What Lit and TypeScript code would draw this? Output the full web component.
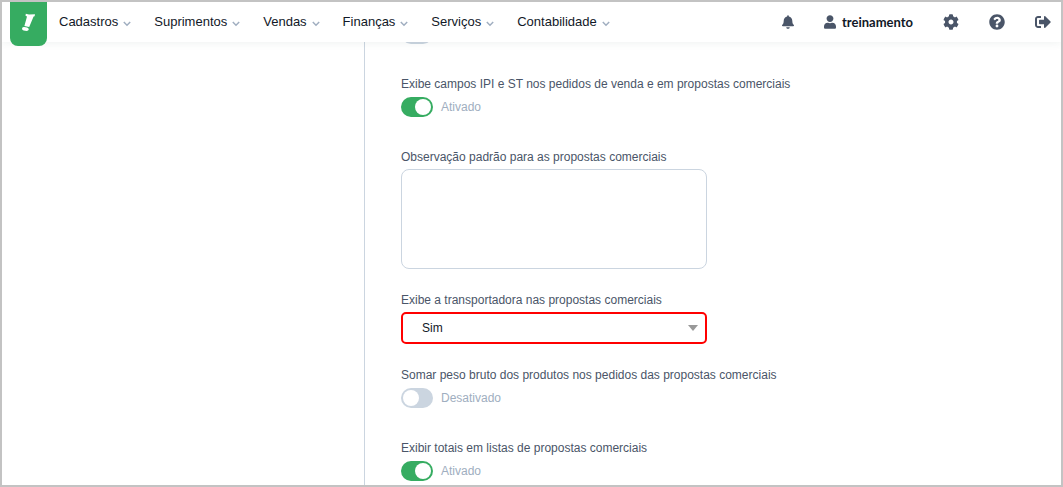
import { LitElement, html, css, svg } from 'lit';
import { customElement, property } from 'lit/decorators.js';

const icons = {
  bell: { box: '0 0 448 512', d: 'M224 512c35.32 0 63.97-28.65 63.97-64H160.03c0 35.35 28.65 64 63.97 64zm215.39-149.71c-19.32-20.76-55.47-51.99-55.47-154.29 0-77.7-54.48-139.9-127.94-155.16V32c0-17.67-14.32-32-31.98-32s-31.98 14.33-31.98 32v20.84C118.56 68.1 64.08 130.3 64.08 208c0 102.3-36.15 133.53-55.47 154.29-6 6.45-8.66 14.16-8.61 21.71.11 16.4 12.98 32 32.1 32h383.8c19.12 0 32-15.6 32.1-32 .05-7.55-2.61-15.27-8.61-21.71z' },
  user: { box: '0 0 448 512', d: 'M224 256c70.7 0 128-57.3 128-128S294.7 0 224 0 96 57.3 96 128s57.3 128 128 128zm89.6 32h-16.7c-22.2 10.2-46.9 16-72.9 16s-50.6-5.8-72.9-16h-16.7C60.2 288 0 348.2 0 422.4V464c0 26.5 21.5 48 48 48h352c26.5 0 48-21.5 48-48v-41.6c0-74.2-60.2-134.4-134.4-134.4z' },
  gear: { box: '0 0 512 512', d: 'M487.4 315.7l-42.6-24.6c4.3-23.2 4.3-47 0-70.2l42.6-24.6c4.9-2.8 7.1-8.6 5.5-14-11.1-35.6-30-67.8-54.7-94.6-3.8-4.1-10-5.1-14.8-2.3L380.8 110c-17.9-15.4-38.5-27.3-60.8-35.1V25.8c0-5.6-3.9-10.5-9.4-11.7-36.7-8.2-74.3-7.8-109.2 0-5.5 1.2-9.4 6.1-9.4 11.7V75c-22.2 7.9-42.8 19.8-60.8 35.1L88.700 85.500c-4.900-2.800-11-1.900-14.800 2.300-24.700 26.700-43.600 58.900-54.700 94.600-1.700 5.400.6 11.200 5.500 14L67.300 221c-4.300 23.200-4.300 47 0 70.200l-42.600 24.600c-4.900 2.800-7.100 8.600-5.500 14 11.100 35.600 30 67.800 54.700 94.600 3.800 4.100 10 5.100 14.800 2.300l42.600-24.600c17.900 15.400 38.500 27.300 60.800 35.100v49.200c0 5.600 3.900 10.500 9.400 11.700 36.700 8.200 74.300 7.800 109.200 0 5.500-1.200 9.400-6.100 9.400-11.700v-49.200c22.200-7.900 42.800-19.800 60.800-35.100l42.600 24.600c4.900 2.800 11 1.900 14.800-2.300 24.700-26.700 43.600-58.900 54.700-94.600 1.500-5.500-.7-11.300-5.600-14.100zM256 336c-44.100 0-80-35.900-80-80s35.900-80 80-80 80 35.900 80 80-35.900 80-80 80z' },
  help: { box: '0 0 512 512', d: 'M504 256c0 136.997-111.043 248-248 248S8 392.997 8 256C8 119.083 119.043 8 256 8s248 111.083 248 248zM262.655 90c-54.497 0-89.255 22.957-116.549 63.758-3.536 5.286-2.353 12.415 2.715 16.258l34.699 26.310c5.205 3.947 12.621 3.008 16.665-2.122 17.864-22.658 30.113-35.797 57.303-35.797 20.429 0 45.698 13.148 45.698 32.958 0 14.976-12.363 22.667-32.534 33.976C247.128 238.528 216 254.941 216 296v4c0 6.627 5.373 12 12 12h56c6.627 0 12-5.373 12-12v-1.333c0-28.462 83.186-29.647 83.186-106.667 0-58.002-60.165-102-116.531-102zM256 338c-25.365 0-46 20.635-46 46 0 25.364 20.635 46 46 46s46-20.636 46-46c0-25.365-20.635-46-46-46z' },
  exit: { box: '0 0 512 512', d: 'M497 273L329 441c-15 15-41 4.500-41-17v-96H152c-13.300 0-24-10.700-24-24v-96c0-13.300 10.700-24 24-24h136V88c0-21.400 25.900-32 41-17l168 168c9.300 9.400 9.300 24.600 0 34zM192 436v-40c0-6.600-5.400-12-12-12H96c-17.700 0-32-14.300-32-32V160c0-17.700 14.300-32 32-32h84c6.600 0 12-5.400 12-12V76c0-6.600-5.400-12-12-12H96c-53 0-96 43-96 96v192c0 53 43 96 96 96h84c6.600 0 12-5.400 12-12z' },
};

const icon = (name: keyof typeof icons, size: string) => html`
  <svg class="icon ${size}" viewBox=${icons[name].box} aria-hidden="true">${svg`<path d=${icons[name].d} />`}</svg>`;

@customElement('app-header')
class AppHeader extends LitElement {
  static styles = css`
    :host { display: block; font-family: "Liberation Sans", Arial, sans-serif; }
    .bar { display: flex; align-items: flex-start; height: 40px; padding: 0 10px 0 8px; background: #fff; box-shadow: 0 1px 8px rgba(45, 90, 80, .08); }
    .logo { display: block; width: 37px; height: 44px; border-radius: 0 0 8px 8px; background: #36ac61; }
    .logo svg { display: block; width: 37px; height: 44px; fill: #fff; }
    .nav { display: flex; gap: 23px; height: 40px; margin-left: 12px; }
    .item { display: flex; align-items: center; gap: 5px; height: 40px; padding: 0; border: 0; background: none; font: 13px/20px "Liberation Sans", Arial, sans-serif; color: #111827; cursor: pointer; }
    .chevron { width: 8px; height: 6px; margin-top: 3px; fill: none; stroke: #a0aec0; stroke-width: 1.5; }
    .tools { display: flex; align-items: center; height: 40px; margin-left: auto; gap: 30px; }
    .tool { display: flex; align-items: center; gap: 6px; padding: 0; border: 0; background: none; color: #4a5568; cursor: pointer; text-decoration: none; }
    .user { margin: 0; font: 700 13px/20px Lato, sans-serif; }
    .name { color: #111827; }
    .icon { display: block; fill: currentColor; }
    .small { width: 12px; height: 14px; }
    .big { width: 16px; height: 16px; }
  `;

  render() {
    const menus = ['Cadastros', 'Suprimentos', 'Vendas', 'Finanças', 'Serviços', 'Contabilidade'];
    return html`
      <header class="bar">
        <a class="logo" href="#" aria-label="Início">
          <svg viewBox="0 0 37 44" aria-hidden="true">
            <path d="M15.800 11.800 19 12.500 25 12.200 24.600 14.200 23.600 14.400 19.200 25 14.400 24 17 14.400 15.500 13.800Z" />
            <ellipse cx="15.400" cy="27" rx="3.400" ry="1.800" transform="rotate(10 15.400 27)" />
          </svg>
        </a>
        <nav class="nav" aria-label="Principal">
          ${menus.map((m) => html`
            <button class="item" type="button">${m}
              <svg class="chevron" viewBox="0 0 8 6" aria-hidden="true"><path d="M.8 1l3.200 3.200L7.200 1" /></svg>
            </button>`)}
        </nav>
        <div class="tools">
          <button class="tool" type="button" aria-label="Notificações">${icon('bell', 'small')}</button>
          <button class="tool user" type="button">${icon('user', 'small')}<span class="name">treinamento</span></button>
          <button class="tool" type="button" aria-label="Configurações">${icon('gear', 'big')}</button>
          <button class="tool" type="button" aria-label="Ajuda">${icon('help', 'big')}</button>
          <a class="tool" href="#" aria-label="Sair">${icon('exit', 'big')}</a>
        </div>
      </header>`;
  }
}

@customElement('toggle-field')
class ToggleField extends LitElement {
  @property() label = '';
  @property({ type: Boolean }) on = false;
  @property({ type: Boolean }) bare = false;

  static styles = css`
    :host { display: block; font: 12px/24px "Liberation Sans", Arial, sans-serif; color: #4a5568; }
    .label { display: block; }
    .row { display: flex; align-items: center; gap: 8px; height: 22px; padding-bottom: 8px; color: #a0aec0; }
    .switch { appearance: none; display: flex; width: 32px; height: 20px; margin: 0; padding: 2px; box-sizing: border-box; border-radius: 10px; background: #cbd5e0; cursor: pointer; }
    .switch::before { content: ""; width: 16px; height: 16px; border-radius: 50%; background: #fff; }
    .switch:checked { justify-content: flex-end; background: #36ac61; }
  `;

  render() {
    return html`
      ${this.bare ? '' : html`<label class="label" for="switch">${this.label}</label>`}
      <div class="row">
        <input class="switch" id="switch" type="checkbox" role="switch" aria-label=${this.label}
          .checked=${this.on} @change=${(e: Event) => { this.on = (e.target as HTMLInputElement).checked; }} />
        ${this.bare ? '' : html`<span>${this.on ? 'Ativado' : 'Desativado'}</span>`}
      </div>`;
  }
}

@customElement('app-root')
class AppRoot extends LitElement {
  static styles = css`
    :host { display: block; font: 12px/24px "Liberation Sans", Arial, sans-serif; color: #4a5568; }
    .frame { display: grid; grid-template: minmax(0, 1fr) / minmax(0, 1fr); box-sizing: border-box; height: 100vh; border: 2px solid #c3c3c3; background: #fff; overflow: hidden; }
    .top { grid-area: 1 / 1; align-self: start; z-index: 1; }
    .page { grid-area: 1 / 1; display: grid; grid-template-columns: 362px minmax(0, 1fr); overflow-y: auto; scrollbar-width: none; }
    .form { display: flex; flex-direction: column; gap: 19px; padding: 21px 36px 0; border-left: 1px solid #cbd5e0; }
    .label { display: block; }
    .notes, .choice { display: block; box-sizing: border-box; width: 100%; max-width: 306px; margin: 0; background: #fff; font: inherit; }
    .notes { height: 100px; padding: 8px; border: 1px solid #cbd5e0; border-radius: 8px; resize: none; }
    .picker { display: grid; align-items: center; max-width: 306px; }
    .choice { grid-area: 1 / 1; appearance: none; height: 32px; padding: 0 24px 0 19px; border: 2px solid #f00; border-radius: 5px; color: #111827; }
    .caret { grid-area: 1 / 1; justify-self: end; width: 10px; height: 6px; margin-right: 9px; fill: #999; pointer-events: none; }
  `;

  render() {
    return html`
      <div class="frame">
        <app-header class="top"></app-header>
        <div class="page">
          <aside></aside>
          <main class="form">
            <toggle-field bare label="Opção"></toggle-field>
            <toggle-field on label="Exibe campos IPI e ST nos pedidos de venda e em propostas comerciais"></toggle-field>
            <div>
              <label class="label" for="notes">Observação padrão para as propostas comerciais</label>
              <textarea class="notes" id="notes"></textarea>
            </div>
            <div>
              <label class="label" for="carrier">Exibe a transportadora nas propostas comerciais</label>
              <div class="picker">
                <select class="choice" id="carrier"><option>Sim</option><option>Não</option></select>
                <svg class="caret" viewBox="0 0 10 6" aria-hidden="true"><path d="M0 0h10L5 6z" /></svg>
              </div>
            </div>
            <toggle-field label="Somar peso bruto dos produtos nos pedidos das propostas comerciais"></toggle-field>
            <toggle-field on label="Exibir totais em listas de propostas comerciais"></toggle-field>
          </main>
        </div>
      </div>`;
  }
}
